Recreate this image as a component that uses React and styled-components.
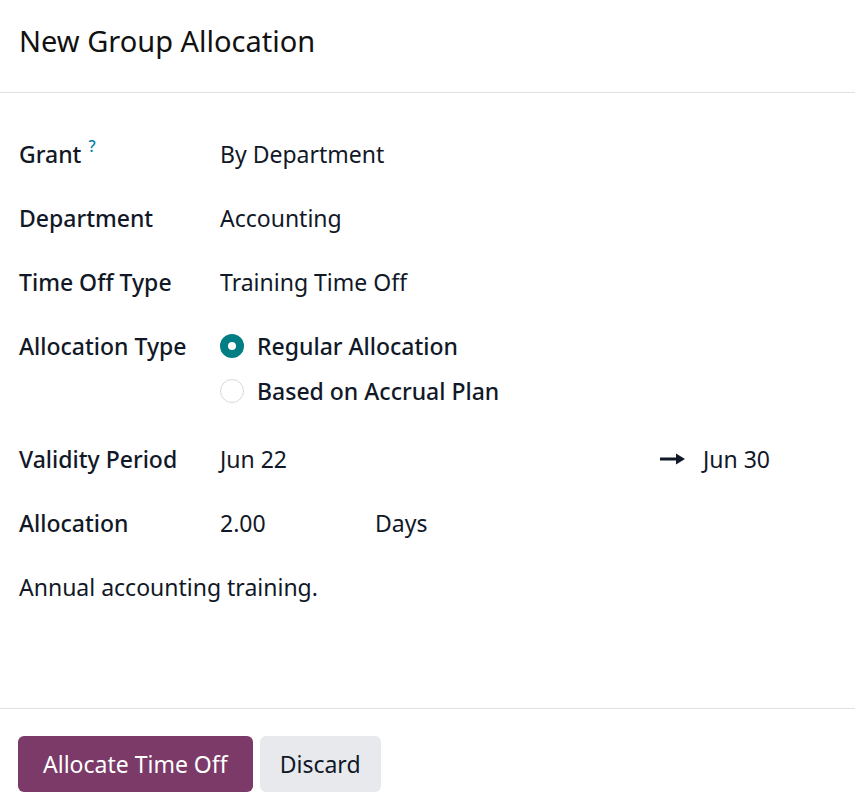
import React from 'react';
import styled, { createGlobalStyle } from 'styled-components';

const GlobalStyle = createGlobalStyle`
  html, body {
    margin: 0;
    padding: 0;
    background: #ffffff;
  }
  body {
    font-family: "Noto Sans", "Open Sans", "Liberation Sans", sans-serif;
    color: #111827;
  }
`;

const Dialog = styled.div`
  display: flex;
  flex-direction: column;
  height: 100vh;
  box-sizing: border-box;
`;

const Header = styled.header`
  padding: 21px 19px 31px;
  border-bottom: 1px solid #dee2e6;
`;

const Title = styled.h1`
  margin: 0;
  font-size: 29px;
  line-height: 40px;
  font-weight: 400;
  color: #111111;
`;

const Body = styled.main`
  flex: 1;
  padding: 29px 19px 0;
`;

const Row = styled.div`
  display: grid;
  grid-template-columns: 201px 1fr;
  padding: 16px 0 ${(p) => p.$padBottom || 16}px;
`;

const Label = styled.div`
  font-size: 23px;
  line-height: 32px;
  font-weight: 500;
  white-space: nowrap;
`;

const Help = styled.sup`
  color: #0180a5;
  font-size: 16px;
  font-weight: 500;
  margin-left: 7px;
  vertical-align: 11px;
  line-height: 0;
`;

const Value = styled.div`
  font-size: 23px;
  line-height: 32px;
`;

const RadioList = styled.div`
  display: flex;
  flex-direction: column;
  gap: 13px;
`;

const RadioOption = styled.label`
  display: flex;
  align-items: center;
  gap: 13px;
  font-size: 23px;
  line-height: 32px;
  font-weight: 500;
`;

const RadioDot = styled.span`
  box-sizing: border-box;
  width: 24px;
  height: 24px;
  border-radius: 50%;
  flex: none;
  background: #ffffff;
  border: ${(p) => (p.$checked ? '8px solid #017e84' : '1px solid #d8dadd')};
`;

const Range = styled.div`
  display: flex;
  align-items: center;
`;

const DateStart = styled.span`
  flex: 0 0 440px;
`;

const Arrow = styled.svg`
  width: 25px;
  height: 12px;
  margin-right: 18px;
  flex: none;
`;

const Amount = styled.div`
  display: flex;
`;

const Number = styled.span`
  flex: 0 0 155px;
`;

const Notes = styled.p`
  margin: 16px 0;
  font-size: 23px;
  line-height: 32px;
`;

const Footer = styled.footer`
  display: flex;
  gap: 7px;
  padding: 27px 18px 20px;
  border-top: 1px solid #dee2e6;
`;

const Button = styled.button`
  height: 56px;
  padding: 0 ${(p) => (p.$primary ? 25 : 20)}px;
  border: none;
  border-radius: 6px;
  font-family: inherit;
  font-size: 23px;
  font-weight: 400;
  cursor: pointer;
  background: ${(p) => (p.$primary ? '#7b3a67' : '#e7e9ed')};
  color: ${(p) => (p.$primary ? '#ffffff' : '#111827')};
`;

function LongArrow() {
  return (
    <Arrow viewBox="0 0 25 12">
      <rect x="0" y="4.5" width="17" height="3" fill="#111827" />
      <path d="M16 0.5 L25 6 L16 11.5 Z" fill="#111827" />
    </Arrow>
  );
}

export default function App() {
  return (
    <>
      <GlobalStyle />
      <Dialog>
        <Header>
          <Title>New Group Allocation</Title>
        </Header>
        <Body>
          <Row>
            <Label>
              Grant<Help>?</Help>
            </Label>
            <Value>By Department</Value>
          </Row>
          <Row>
            <Label>Department</Label>
            <Value>Accounting</Value>
          </Row>
          <Row>
            <Label>Time Off Type</Label>
            <Value>Training Time Off</Value>
          </Row>
          <Row $padBottom={20}>
            <Label>Allocation Type</Label>
            <RadioList>
              <RadioOption>
                <RadioDot $checked />
                Regular Allocation
              </RadioOption>
              <RadioOption>
                <RadioDot />
                Based on Accrual Plan
              </RadioOption>
            </RadioList>
          </Row>
          <Row>
            <Label>Validity Period</Label>
            <Value>
              <Range>
                <DateStart>Jun 22</DateStart>
                <LongArrow />
                <span>Jun 30</span>
              </Range>
            </Value>
          </Row>
          <Row>
            <Label>Allocation</Label>
            <Value>
              <Amount>
                <Number>2.00</Number>
                <span>Days</span>
              </Amount>
            </Value>
          </Row>
          <Notes>Annual accounting training.</Notes>
        </Body>
        <Footer>
          <Button $primary>Allocate Time Off</Button>
          <Button>Discard</Button>
        </Footer>
      </Dialog>
    </>
  );
}
